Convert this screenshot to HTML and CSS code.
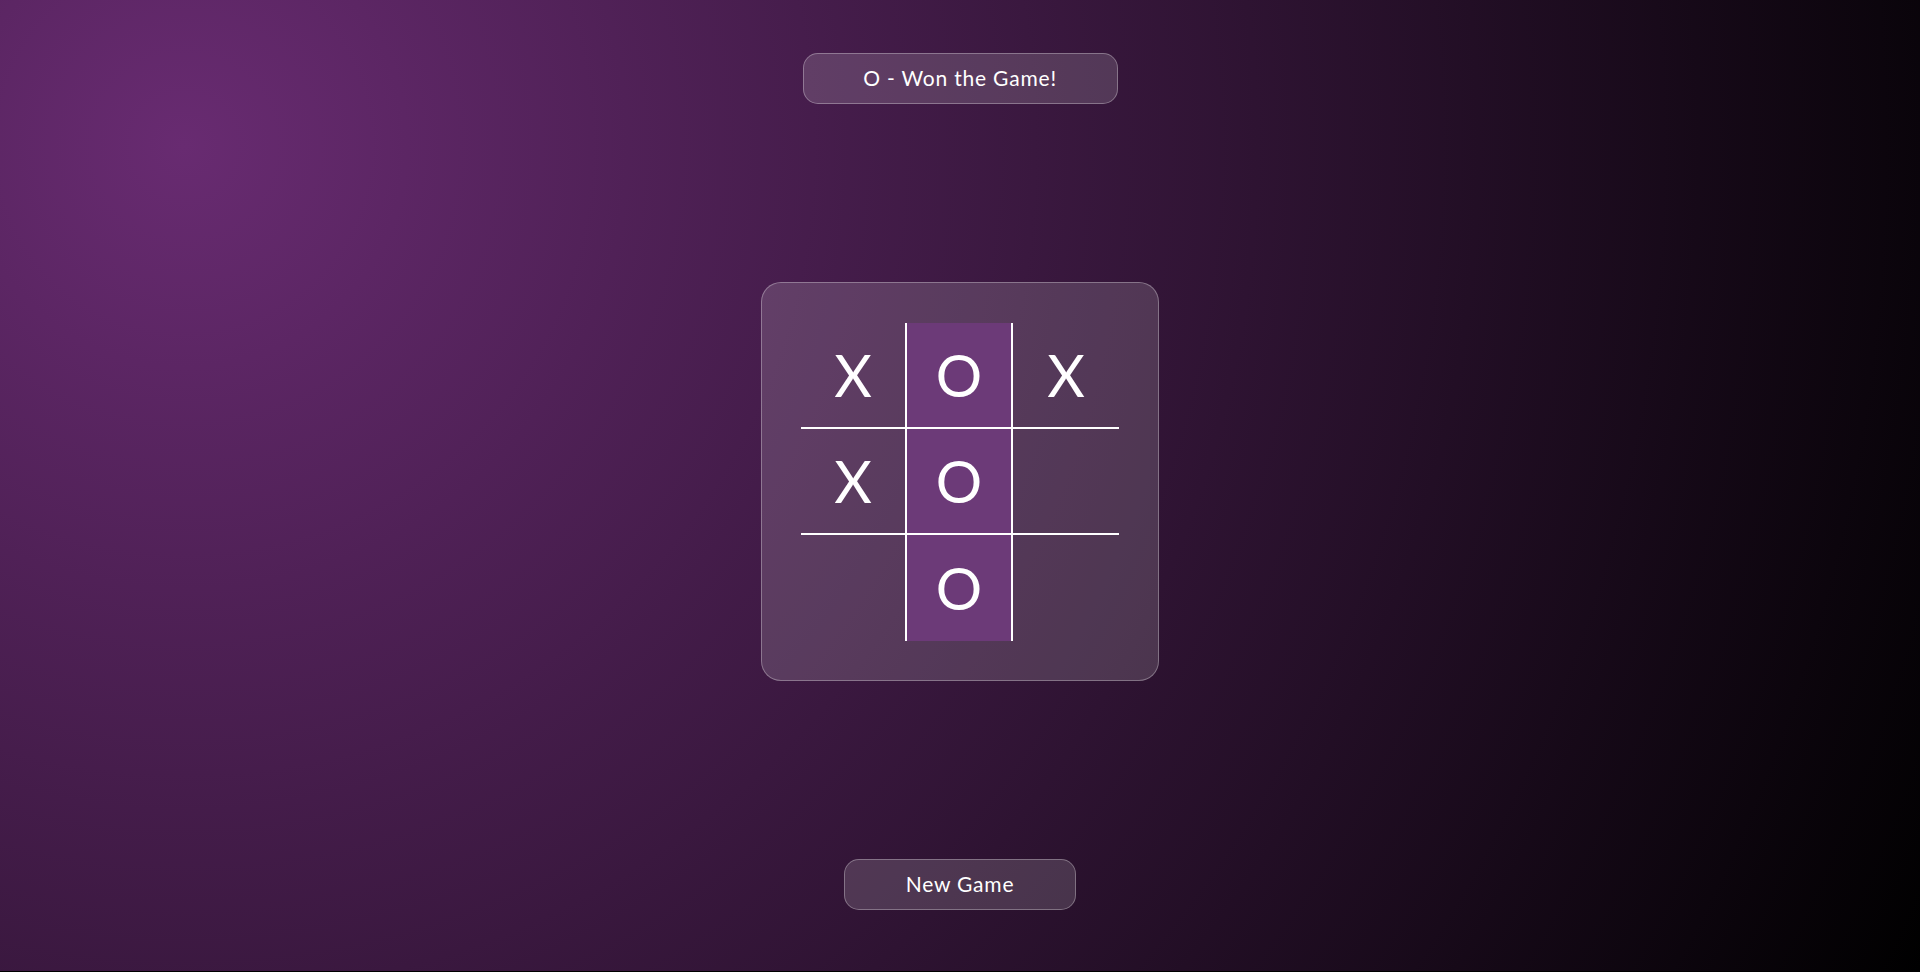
FILE: index.html
```html
<!DOCTYPE html>
<html lang="en">
<head>
<meta charset="utf-8">
<title>Tic Tac Toe</title>
<link rel="stylesheet" href="styles.css">
</head>
<body>
<main class="page">
  <div class="status">O - Won the Game!</div>
  <div class="board">
    <div class="grid">
      <div class="cell">X</div>
      <div class="cell win">O</div>
      <div class="cell">X</div>
      <div class="cell">X</div>
      <div class="cell win">O</div>
      <div class="cell"></div>
      <div class="cell"></div>
      <div class="cell win">O</div>
      <div class="cell"></div>
    </div>
  </div>
  <button class="new-game" type="button">New Game</button>
</main>
</body>
</html>
```
FILE: styles.css
```css
* {
  box-sizing: border-box;
}

html {
  background: #000;
}

body {
  margin: 0;
  font-family: "Lato", "Noto Sans", sans-serif;
  color: #fff;
}

.page {
  height: calc(100vh - 1px);
  display: flex;
  flex-direction: column;
  align-items: center;
  gap: 178px;
  padding-top: 53px;
  background: radial-gradient(circle at 9.6% 15%, #682b71 0%, #000 100%);
}

.status,
.new-game {
  background: rgba(255, 255, 255, 0.15);
  border: 1px solid rgba(255, 255, 255, 0.3);
  border-radius: 15px;
  color: #fff;
  font-family: inherit;
  font-size: 21px;
  letter-spacing: 0.8px;
  line-height: 29px;
  text-align: center;
}

.status {
  width: 315px;
  padding: 9px 0 11px;
}

.new-game {
  width: 232px;
  height: 51px;
  padding: 9px 0 11px;
  cursor: pointer;
}

.board {
  width: 398px;
  height: 399px;
  padding: 40px 39px 39px;
  background: rgba(255, 255, 255, 0.15);
  border: 1px solid rgba(255, 255, 255, 0.3);
  border-radius: 20px;
}

.grid {
  display: grid;
  grid-template-columns: repeat(3, 106px);
  grid-template-rows: repeat(3, 106px);
}

.cell {
  display: flex;
  align-items: center;
  justify-content: center;
  font-size: 58px;
  line-height: 1;
  color: #fff;
  border-right: 2px solid #fff;
  border-bottom: 2px solid #fff;
}

.cell:nth-child(3n) {
  border-right: none;
}

.cell:nth-child(n+7) {
  border-bottom: none;
}

.cell.win {
  background: #6c3a78;
}
```
